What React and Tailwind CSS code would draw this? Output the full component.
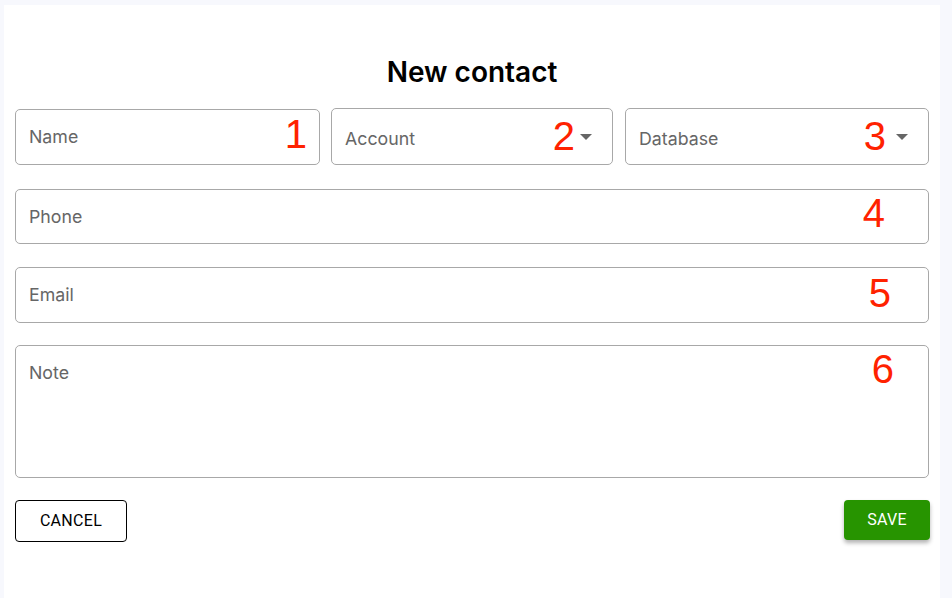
import React from 'react';

const Mark = ({ n, className }) => (
    <span className={`absolute text-[40px] leading-none text-[#ff2200] ${className}`} style={{ fontFamily: '"Liberation Sans", Arial, sans-serif' }}>
        {n}
    </span>
);

const Caret = () => (
    <svg className="absolute right-[20px] top-[25px]" width="12" height="6" viewBox="0 0 12 6">
        <path d="M0 0 L12 0 L6 6 Z" fill="#666666" />
    </svg>
);

const Field = ({ label, mark, markClass, select, className = '' }) => (
    <div className={`relative rounded-[5px] border border-[#a8a8a8] bg-white ${className}`}>
        <span className={`absolute left-[13px] top-1/2 -translate-y-1/2 text-[17.75px] text-[#666666] ${select ? 'mt-[2px]' : ''}`}>{label}</span>
        {select && <Caret />}
        <Mark n={mark} className={markClass} />
    </div>
);

export default function App() {
    return (
        <div className="min-h-[598px] bg-[#f7f8fd] pl-[4px] pr-[12px] pt-[5px]" style={{ fontFamily: 'Inter, "Noto Sans", sans-serif' }}>
            <div className="min-h-[593px] bg-white px-[11px]">
                {/* Title */}
                <h1 className="pt-[50px] text-center text-[28px] font-semibold leading-[34px] text-black">New contact</h1>

                {/* First row */}
                <div className="mt-[19px] flex items-start gap-[11px]">
                    <Field label="Name" mark="1" markClass="right-[12px] top-[4px]" className="mt-[1px] h-[56px] w-[305px]" />
                    <Field label="Account" mark="2" markClass="right-[37px] top-[7px]" select className="h-[57px] w-[282px]" />
                    <Field label="Database" mark="3" markClass="right-[42px] top-[7px]" select className="ml-[1px] h-[57px] w-[304px]" />
                </div>

                <Field label="Phone" mark="4" markClass="right-[43px] top-[3px]" className="mt-[24px] h-[55px]" />
                <Field label="Email" mark="5" markClass="right-[37px] top-[5px]" className="mt-[23px] h-[56px]" />

                {/* Note */}
                <div className="relative mt-[22px] h-[133px] rounded-[5px] border border-[#a8a8a8]">
                    <span className="absolute left-[13px] top-[14px] text-[17.75px] text-[#666666]">Note</span>
                    <Mark n="6" className="right-[34px] top-[3px]" />
                </div>

                {/* Buttons */}
                <div className="mt-[22px] flex items-start justify-between">
                    <button className="h-[42px] w-[112px] rounded-[4px] border border-black text-[16px] tracking-[0.3px] text-black" style={{ fontFamily: 'Roboto, sans-serif' }}>
                        CANCEL
                    </button>
                    <button className="mr-[-1px] h-[40px] w-[86px] rounded-[4px] bg-[#279400] text-[16px] tracking-[0.3px] text-white shadow-[0_3px_4px_rgba(0,0,0,0.3)]" style={{ fontFamily: 'Roboto, sans-serif' }}>
                        SAVE
                    </button>
                </div>
            </div>
        </div>
    );
}
